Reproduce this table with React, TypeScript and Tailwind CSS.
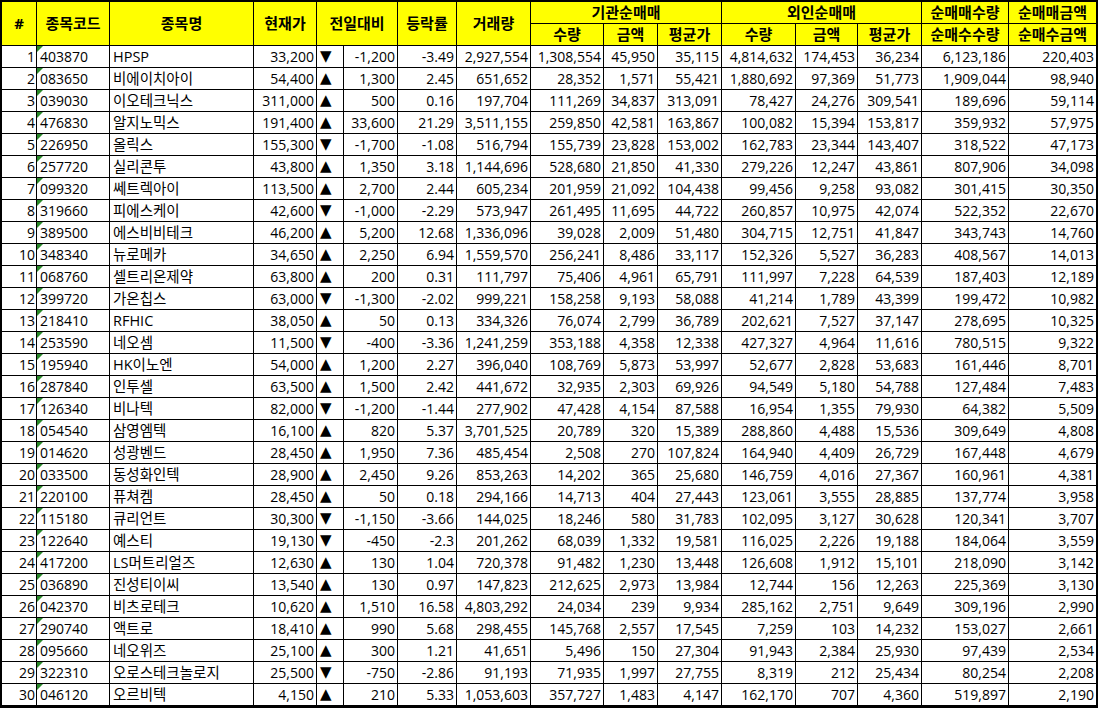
const rows: string[][] = [
  ["1", "403870", "HPSP", "33,200", "-1,200", "-3.49", "2,927,554", "1,308,554", "45,950", "35,115", "4,814,632", "174,453", "36,234", "6,123,186", "220,403"],
  ["2", "083650", "비에이치아이", "54,400", "1,300", "2.45", "651,652", "28,352", "1,571", "55,421", "1,880,692", "97,369", "51,773", "1,909,044", "98,940"],
  ["3", "039030", "이오테크닉스", "311,000", "500", "0.16", "197,704", "111,269", "34,837", "313,091", "78,427", "24,276", "309,541", "189,696", "59,114"],
  ["4", "476830", "알지노믹스", "191,400", "33,600", "21.29", "3,511,155", "259,850", "42,581", "163,867", "100,082", "15,394", "153,817", "359,932", "57,975"],
  ["5", "226950", "올릭스", "155,300", "-1,700", "-1.08", "516,794", "155,739", "23,828", "153,002", "162,783", "23,344", "143,407", "318,522", "47,173"],
  ["6", "257720", "실리콘투", "43,800", "1,350", "3.18", "1,144,696", "528,680", "21,850", "41,330", "279,226", "12,247", "43,861", "807,906", "34,098"],
  ["7", "099320", "쎄트렉아이", "113,500", "2,700", "2.44", "605,234", "201,959", "21,092", "104,438", "99,456", "9,258", "93,082", "301,415", "30,350"],
  ["8", "319660", "피에스케이", "42,600", "-1,000", "-2.29", "573,947", "261,495", "11,695", "44,722", "260,857", "10,975", "42,074", "522,352", "22,670"],
  ["9", "389500", "에스비비테크", "46,200", "5,200", "12.68", "1,336,096", "39,028", "2,009", "51,480", "304,715", "12,751", "41,847", "343,743", "14,760"],
  ["10", "348340", "뉴로메카", "34,650", "2,250", "6.94", "1,559,570", "256,241", "8,486", "33,117", "152,326", "5,527", "36,283", "408,567", "14,013"],
  ["11", "068760", "셀트리온제약", "63,800", "200", "0.31", "111,797", "75,406", "4,961", "65,791", "111,997", "7,228", "64,539", "187,403", "12,189"],
  ["12", "399720", "가온칩스", "63,000", "-1,300", "-2.02", "999,221", "158,258", "9,193", "58,088", "41,214", "1,789", "43,399", "199,472", "10,982"],
  ["13", "218410", "RFHIC", "38,050", "50", "0.13", "334,326", "76,074", "2,799", "36,789", "202,621", "7,527", "37,147", "278,695", "10,325"],
  ["14", "253590", "네오셈", "11,500", "-400", "-3.36", "1,241,259", "353,188", "4,358", "12,338", "427,327", "4,964", "11,616", "780,515", "9,322"],
  ["15", "195940", "HK이노엔", "54,000", "1,200", "2.27", "396,040", "108,769", "5,873", "53,997", "52,677", "2,828", "53,683", "161,446", "8,701"],
  ["16", "287840", "인투셀", "63,500", "1,500", "2.42", "441,672", "32,935", "2,303", "69,926", "94,549", "5,180", "54,788", "127,484", "7,483"],
  ["17", "126340", "비나텍", "82,000", "-1,200", "-1.44", "277,902", "47,428", "4,154", "87,588", "16,954", "1,355", "79,930", "64,382", "5,509"],
  ["18", "054540", "삼영엠텍", "16,100", "820", "5.37", "3,701,525", "20,789", "320", "15,389", "288,860", "4,488", "15,536", "309,649", "4,808"],
  ["19", "014620", "성광벤드", "28,450", "1,950", "7.36", "485,454", "2,508", "270", "107,824", "164,940", "4,409", "26,729", "167,448", "4,679"],
  ["20", "033500", "동성화인텍", "28,900", "2,450", "9.26", "853,263", "14,202", "365", "25,680", "146,759", "4,016", "27,367", "160,961", "4,381"],
  ["21", "220100", "퓨쳐켐", "28,450", "50", "0.18", "294,166", "14,713", "404", "27,443", "123,061", "3,555", "28,885", "137,774", "3,958"],
  ["22", "115180", "큐리언트", "30,300", "-1,150", "-3.66", "144,025", "18,246", "580", "31,783", "102,095", "3,127", "30,628", "120,341", "3,707"],
  ["23", "122640", "예스티", "19,130", "-450", "-2.3", "201,262", "68,039", "1,332", "19,581", "116,025", "2,226", "19,188", "184,064", "3,559"],
  ["24", "417200", "LS머트리얼즈", "12,630", "130", "1.04", "720,378", "91,482", "1,230", "13,448", "126,608", "1,912", "15,101", "218,090", "3,142"],
  ["25", "036890", "진성티이씨", "13,540", "130", "0.97", "147,823", "212,625", "2,973", "13,984", "12,744", "156", "12,263", "225,369", "3,130"],
  ["26", "042370", "비츠로테크", "10,620", "1,510", "16.58", "4,803,292", "24,034", "239", "9,934", "285,162", "2,751", "9,649", "309,196", "2,990"],
  ["27", "290740", "액트로", "18,410", "990", "5.68", "298,455", "145,768", "2,557", "17,545", "7,259", "103", "14,232", "153,027", "2,661"],
  ["28", "095660", "네오위즈", "25,100", "300", "1.21", "41,651", "5,496", "150", "27,304", "91,943", "2,384", "25,930", "97,439", "2,534"],
  ["29", "322310", "오로스테크놀로지", "25,500", "-750", "-2.86", "91,193", "71,935", "1,997", "27,755", "8,319", "212", "25,434", "80,254", "2,208"],
  ["30", "046120", "오르비텍", "4,150", "210", "5.33", "1,053,603", "357,727", "1,483", "4,147", "162,170", "707", "4,360", "519,897", "2,190"],
];

const hd = "bg-[#ffff00] flex items-center justify-center font-bold text-[15px] text-black whitespace-nowrap";
const num = "bg-white flex items-center justify-end pr-[2px] whitespace-nowrap";

const App = () => {
  return (
    <div className="w-[1098px] h-[708px] bg-white font-['Open_Sans','Noto_Sans_CJK_KR',sans-serif] text-[14px] text-black">
      <div className="grid grid-cols-[34px_72px_143px_62px_26px_53px_58px_73px_72px_53px_63px_73px_61px_63px_86px_87px] auto-rows-[21px] gap-px bg-black border-2 border-b-[3px] border-black">
        {/* header */}
        <div className={`${hd} row-span-2`}>#</div>
        <div className={`${hd} row-span-2`}>종목코드</div>
        <div className={`${hd} row-span-2`}>종목명</div>
        <div className={`${hd} row-span-2`}>현재가</div>
        <div className={`${hd} row-span-2 col-span-2`}>전일대비</div>
        <div className={`${hd} row-span-2`}>등락률</div>
        <div className={`${hd} row-span-2`}>거래량</div>
        <div className={`${hd} col-span-3`}>기관순매매</div>
        <div className={`${hd} col-span-3`}>외인순매매</div>
        <div className={hd}>순매매수량</div>
        <div className={hd}>순매매금액</div>
        <div className={hd}>수량</div>
        <div className={hd}>금액</div>
        <div className={hd}>평균가</div>
        <div className={hd}>수량</div>
        <div className={hd}>금액</div>
        <div className={hd}>평균가</div>
        <div className={hd}>순매수수량</div>
        <div className={hd}>순매수금액</div>

        {/* rows */}
        {rows.map((r) => {
          const down = r[4].startsWith("-");
          return [
            <div key={r[0] + "n"} className={`${num} pr-px`}>{r[0]}</div>,
            <div key={r[0] + "c"} className="relative bg-white flex items-center pl-[3px]">
              <span className="absolute top-0 left-0 w-0 h-0 border-t-[6px] border-t-[#2a8a2a] border-r-[6px] border-r-transparent" />
              {r[1]}
            </div>,
            <div key={r[0] + "m"} className="bg-white flex items-center pl-[3px] whitespace-nowrap text-[14.5px]">{r[2]}</div>,
            <div key={r[0] + "p"} className={num}>{r[3]}</div>,
            <div key={r[0] + "a"} className="bg-white flex items-center pl-[3px] font-['DejaVu_Sans',sans-serif] text-[15px] leading-none">
              {down ? "▼" : "▲"}
            </div>,
            ...r.slice(4).map((v, i) => (
              <div key={r[0] + "v" + i} className={num}>{v}</div>
            )),
          ];
        })}
      </div>
    </div>
  );
};

export default App;
